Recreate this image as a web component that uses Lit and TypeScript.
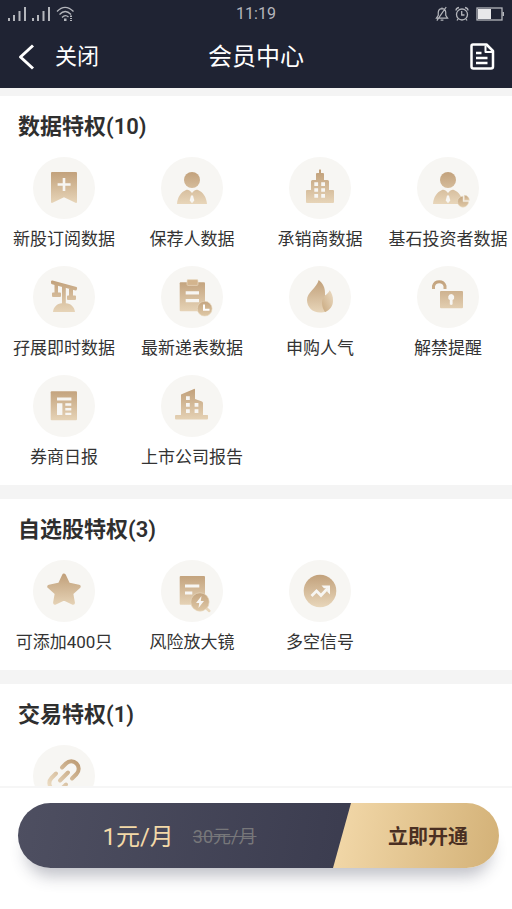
import { LitElement, html, css, svg, nothing } from "lit";
import type { SVGTemplateResult } from "lit";
import { customElement, property } from "lit/decorators.js";

const person = svg`
  <circle cx="31" cy="23" r="8"/>
  <path d="M16 47C16.500 40 20 35 25 33C27 32.500 28.500 33 31 36C33.500 33 35 32.500 37 33C42 35 45.500 40 46 47Z"/>
  <path class="hole" d="M30 38.500H32L33.300 43.500L31 46.300L28.700 43.500Z"/>`;

const icons: Record<string, SVGTemplateResult> = {
  bookmark: svg`
    <path d="M19 15H43Q44 15 44 16V45.500L43 46L31 40.300L19 46L18 45.500V16Q18 15 19 15Z"/>
    <path class="hole" d="M29.700 21H32.300V26.200H37.600V28.800H32.300V34H29.700V28.800H24.600V26.200H29.700Z"/>`,
  person,
  tower: svg`
    <path d="M30 13Q31 11.500 32 13V16H34Q35 16 35 17V23H38.500Q40 23 40 24.500V33H44Q45 33 45 34V45Q45 46 44 46H18Q17 46 17 45V34Q17 33 18 33H22V24.500Q22 23 23.500 23H27V17Q27 16 28 16H30Z"/>
    <path class="hole" d="M25.300 25.300h3.800v3.600h-3.800zM32.200 25.300h3.800v3.600h-3.800zM25.300 31.200h3.800v3.600h-3.800zM32.200 31.200h3.800v3.600h-3.800zM25.300 37.100h3.800v3.600h-3.800zM32.200 37.100h3.800v3.600h-3.800z"/>`,
  investor: svg`${person}
    <path class="halo" d="M46 39.200A5.500 5.500 0 1 0 51.500 44.700H46Z"/>
    <path class="halo" d="M47.300 43.300V38.300A5 5 0 0 1 52.300 43.300Z"/>`,
  scale: svg`
    <path d="M18 15.500Q18.200 14.300 19.500 14.600L43.500 21Q44.500 21.500 44 23Q43.600 24.800 42.500 24.600L19 18.300Q17.600 18 18 15.500Z"/>
    <path d="M21.500 18H25V26.500H27Q28 26.500 28 27.500V30Q28 31 27 31H20Q19 31 19 30V27.500Q19 26.500 20 26.500H21.500Z"/>
    <path d="M36 23H40V29.500H42Q43 29.500 43 30.500V33Q43 34 42 34H35Q34 34 34 33V30.500Q34 29.500 35 29.500H36Z"/>
    <path d="M29 19.500H32.800V37.200C38 37.500 41.500 41 42 46H20C20.500 41 24 37.500 29 37.200Z"/>`,
  clipboard: svg`
    <rect x="18.700" y="16.300" width="25.300" height="29" rx="1"/>
    <rect class="light" x="26" y="13.600" width="11" height="5.800" rx="1"/>
    <path class="hole" d="M24.700 25.300h13.300v3.300h-13.300zM24.700 33h13.300v3.300h-13.300z"/>
    <circle class="halo" cx="43.700" cy="42.700" r="7.400"/>
    <path class="cut" d="M43 38.500V43.700H48.500"/>`,
  flame: svg`
    <path d="M29.700 14C33.500 17 36.500 21 36 29L40 37L37 45.800C35.500 46.300 33.500 46.500 31 46.500C23.500 46.500 18 41 18 34C18 26 27.500 22.500 29.700 14Z"/>
    <path class="edge" d="M40.700 24.300C42.500 27 44.200 30 44 35C43.800 40.500 41 44 36 46C32 40 32 33 36 29.500C38 28 39.500 27 40.700 24.300Z"/>`,
  lock: svg`
    <path class="line thick" d="M16.500 23V20A6 6 0 0 1 28 20V23"/>
    <rect x="23" y="25" width="23" height="17.300" rx="1"/>
    <path class="hole" d="M34.200 28A3.200 3.200 0 0 1 35.600 34V38.200Q34.200 39.800 32.800 38.200V34A3.200 3.200 0 0 1 34.200 28Z"/>`,
  news: svg`
    <rect x="17.700" y="16.300" width="26.300" height="29" rx="1"/>
    <path class="hole" d="M24 22.600h14.400v3h-14.400zM24 28.300h5.400v11.800h-5.400zM32.300 28.300h6v2.400h-6zM32.300 33h6v2.400h-6zM32.300 37.700h6v2.400h-6z"/>`,
  company: svg`
    <path d="M20 19.500L33 14Q34 13.500 34 14.700V24L41 26.500Q42 27 42 28V40H46.500Q47 40 47 41V43.500Q47 44.500 46 44.500H15Q14 44.500 14 43.500V41Q14 40 15 40H20Z"/>
    <path class="hole" d="M25 21.300h3.800v3.800h-3.800zM25 28h3.800v3.800h-3.800zM33.600 28h3.800v3.800h-3.800zM25 34.200h3.800v3.800h-3.800zM33.600 34.200h3.800v3.800h-3.800z"/>`,
  star: svg`
    <path class="round" d="M31 15.500L35.200 24.500L45.700 26.600L38.200 33.200L39.900 42.700L31 38.500L22.100 42.700L23.800 33.200L16.300 26.600L26.800 24.500Z"/>`,
  magnifier: svg`
    <rect x="18.700" y="16" width="25.300" height="28.700" rx="1"/>
    <path class="hole" d="M24 24.600h14.300v3h-14.300zM24 31.600h7.300v3h-7.300z"/>
    <path class="line" d="M44.500 47.500L48.300 51"/>
    <circle class="halo" cx="39" cy="42" r="9.200"/>
    <path class="hole" d="M40.500 36L35 43H38.200L37.500 48L43 41H39.800Z"/>`,
  trend: svg`
    <circle cx="31" cy="31" r="16.300"/>
    <path class="cut wide" d="M22.500 36L27.500 31L32 35.500L38.500 28.500"/>
    <path class="hole" d="M32.500 25.500H41V34.500L38.200 31.800V28.300H35Z"/>`,
  link: svg`
    <path class="line chain" d="M29 22.500L33 18.500A7.300 7.300 0 0 1 43.500 29L39 33.500M27 35.500L35 27.500M33 39.500L29 43.500A7.300 7.300 0 0 1 18.500 33L23 28.500"/>`,
};

interface Privilege { icon: string; label?: string }
interface Group { title: string; items: Privilege[] }

const groups: Group[] = [
  {
    title: "数据特权",
    items: [
      { icon: "bookmark", label: "新股订阅数据" },
      { icon: "person", label: "保荐人数据" },
      { icon: "tower", label: "承销商数据" },
      { icon: "investor", label: "基石投资者数据" },
      { icon: "scale", label: "孖展即时数据" },
      { icon: "clipboard", label: "最新递表数据" },
      { icon: "flame", label: "申购人气" },
      { icon: "lock", label: "解禁提醒" },
      { icon: "news", label: "券商日报" },
      { icon: "company", label: "上市公司报告" },
    ],
  },
  {
    title: "自选股特权",
    items: [
      { icon: "star", label: "可添加400只" },
      { icon: "magnifier", label: "风险放大镜" },
      { icon: "trend", label: "多空信号" },
    ],
  },
  { title: "交易特权", items: [{ icon: "link" }] },
];

@customElement("privilege-icon")
export class PrivilegeIcon extends LitElement {
  @property() name = "";

  static styles = css`
    :host { display: block; width: 62px; height: 62px; border-radius: 50%; background: #f7f6f3; }
    .glyph { display: block; width: 62px; height: 62px; fill: url(#gold); }
    .hole { fill: #f7f6f3; }
    .light { fill: #d3b48d; stroke: #ecdfca; stroke-width: 0.600; }
    .halo { fill: url(#gold-own); stroke: #eadbc4; stroke-width: 0.600; }
    .edge { fill: url(#side); }
    .line { fill: none; stroke: url(#gold); stroke-width: 2.500; stroke-linecap: round; stroke-linejoin: round; }
    .thick { stroke-width: 3; stroke-linecap: butt; }
    .chain { stroke: url(#slant); stroke-width: 4; }
    .cut { fill: none; stroke: #fff; stroke-width: 2; }
    .wide { stroke: #f7f6f3; stroke-width: 2.800; }
    .round { stroke: url(#gold); stroke-width: 4; stroke-linejoin: round; }
  `;

  render() {
    return html`
      <svg class="glyph" viewBox="0 0 62 62" aria-hidden="true">
        <defs>
          <linearGradient id="gold" gradientUnits="userSpaceOnUse" x1="0" y1="14" x2="0" y2="47">
            <stop offset="0" stop-color="#c1a07a"/><stop offset="1" stop-color="#e8d6ba"/>
          </linearGradient>
          <linearGradient id="gold-own" x1="0" y1="0" x2="0" y2="1">
            <stop offset="0" stop-color="#c4a580"/><stop offset="1" stop-color="#dfc8a6"/>
          </linearGradient>
          <linearGradient id="side" x1="0" y1="1" x2="1" y2="0">
            <stop offset="0" stop-color="#c9a97f"/><stop offset="1" stop-color="#ecdcc4"/>
          </linearGradient>
          <linearGradient id="slant" gradientUnits="userSpaceOnUse" x1="44" y1="18" x2="18" y2="44">
            <stop offset="0" stop-color="#c09f78"/><stop offset="1" stop-color="#ecdcc3"/>
          </linearGradient>
        </defs>
        ${icons[this.name] ?? nothing}
      </svg>`;
  }
}

@customElement("status-bar")
export class StatusBar extends LitElement {
  static styles = css`
    :host { display: grid; grid-template-columns: 1fr auto 1fr; align-items: center; height: 27px; padding: 0 8px; color: #b4b6bc; font-size: 16px; line-height: 20px; }
    .side { display: flex; align-items: center; gap: 6px; }
    .icon { display: block; fill: none; stroke: currentColor; stroke-width: 1.300; }
    .end { justify-content: flex-end; }
    .solid { fill: currentColor; stroke: none; }
    .charge { fill: #e8e8ea; stroke: none; }
  `;

  private signal() {
    return html`<svg class="icon" width="18" height="14" viewBox="0 0 18 14" aria-hidden="true">
      <path class="solid" d="M0 11h2v3h-2zM5 8h2v6h-2zM10.500 4h2v10h-2zM16 0h2v14h-2z"/></svg>`;
  }

  render() {
    return html`
      <div class="side">
        ${this.signal()}${this.signal()}
        <svg class="icon" width="19" height="16" viewBox="0 0 19 16" aria-hidden="true">
          <path d="M1 5.500Q9 -2.800 17.500 5.500M3.500 8.500Q9.200 2.500 15 8.500M6 11.500Q9.200 8 12.500 11"/>
          <path class="solid" d="M8 12.500h2.500v2.500h-2.500zM14 9.500h2v1.500h-2zM14 12h2v1h-2zM14 14h2v1h-2z"/>
        </svg>
      </div>
      <time>11:19</time>
      <div class="side end">
        <svg class="icon" width="14" height="16" viewBox="0 0 15 16" aria-hidden="true">
          <path d="M1.500 12.500H13.500L11.500 9.500V6Q11 2.500 7.500 2.300Q4 2.500 3.500 6V9.500ZM7.500 2V1M6 14.500H9M2 15L12 .5"/>
        </svg>
        <svg class="icon" width="14" height="16" viewBox="0 0 14 16" aria-hidden="true">
          <circle cx="7" cy="8.500" r="5.500"/><path d="M6.700 5V9H9.500M1 4.500Q1 2 4 1.500M13 4.500Q13 2 10 1.500M3 13L2 14.500M11 13L12 14.500"/>
        </svg>
        <svg class="icon" width="29" height="14" viewBox="0 0 29 14" aria-hidden="true">
          <rect x="2" y="1" width="25" height="12"/><path class="charge" d="M3 2h13v10h-13z"/><path class="solid" d="M27.500 5h1.500v4h-1.500z"/>
        </svg>
      </div>`;
  }
}

@customElement("app-root")
export class AppRoot extends LitElement {
  static styles = css`
    :host { display: flex; flex-direction: column; height: 100vh; background: #fff; color: #333; font-family: Roboto, "Noto Sans CJK SC", sans-serif; }
    .header { flex: none; background: #1f2333; color: #fff; padding-bottom: 1px; }
    .nav { display: grid; grid-template-columns: 1fr auto 1fr; align-items: center; height: 60px; padding: 0 16px; }
    .plain { display: flex; align-items: center; gap: 19px; padding: 0; border: 0; background: none; color: inherit; font: inherit; font-size: 22px; line-height: 32px; }
    .records { justify-self: end; }
    .title { margin: 0; font-size: 24px; font-weight: 400; line-height: 32px; }
    .nav-icon { display: block; fill: none; stroke: #fff; stroke-width: 3; stroke-linejoin: round; }
    .content { flex: 1; min-height: 0; overflow-y: auto; scrollbar-width: none; display: flex; flex-direction: column; gap: 14px; padding-top: 8px; background: #f4f4f4; }
    .group { flex: none; padding: 15px 0 16px; background: #fff; }
    .heading { margin: 0 0 14px; padding: 0 18px; font-size: 22px; font-weight: 600; line-height: 32px; color: #2f2f2f; }
    .grid { display: grid; grid-template-columns: repeat(4, minmax(0, 1fr)); row-gap: 15px; margin: 0; padding: 0; list-style: none; }
    .item { display: flex; flex-direction: column; align-items: center; gap: 8px; font-size: 17px; line-height: 24px; white-space: nowrap; }
    .footer { flex: none; padding: 15px 13px 41px 18px; border-top: 2px solid #f6f6f6; background: #fff; }
    .offer { display: flex; height: 65px; border-radius: 33px; box-shadow: 0 16px 16px -8px rgba(60, 62, 85, 0.32); }
    .price { flex: 1; display: flex; align-items: center; justify-content: center; gap: 19px; padding: 2px 18px 0 8px; border-radius: 33px 0 0 33px; background: linear-gradient(100deg, #4e4f61, #3b3c4f); color: #f3d9a8; font-size: 24px; line-height: 32px; }
    .old { color: #77777a; font-size: 18px; line-height: 24px; }
    .open { width: 166px; margin-left: -18px; padding: 2px 0 0 24px; border: 0; border-radius: 0 33px 33px 0; background: linear-gradient(100deg, #f3d9aa, #d3b177); clip-path: polygon(18px 0, 100% 0, 100% 100%, 0 100%); color: #4a2f22; font: inherit; font-size: 20px; font-weight: 600; line-height: 32px; }
  `;

  render() {
    return html`
      <header class="header">
        <status-bar></status-bar>
        <nav class="nav">
          <button class="plain">
            <svg class="nav-icon" width="20" height="28" viewBox="0 0 20 28" aria-hidden="true"><path d="M17 2.500L4.500 14L17 25.500"/></svg>
            关闭
          </button>
          <h1 class="title">会员中心</h1>
          <button class="plain records" aria-label="记录">
            <svg class="nav-icon" width="28" height="28" viewBox="0 0 28 28" aria-hidden="true">
              <path d="M5 1.500H18.500L25 8V23.500Q25 25.500 23 25.500H5.500Q3.500 25.500 3.500 23.500V3Q3.500 1.500 5 1.500Z" stroke-width="2.500"/>
              <path d="M17.500 2.500V9H24" stroke-width="2"/>
              <path d="M8 10H13.500M8 15H19.500M8 20H19.500" stroke-width="2.500"/>
            </svg>
          </button>
        </nav>
      </header>
      <main class="content">
        ${groups.map((g) => html`
          <section class="group">
            <h2 class="heading">${g.title}(${g.items.length})</h2>
            <ul class="grid">
              ${g.items.map((i) => html`
                <li class="item">
                  <privilege-icon name=${i.icon}></privilege-icon>
                  ${i.label ? html`<span>${i.label}</span>` : nothing}
                </li>`)}
            </ul>
          </section>`)}
      </main>
      <footer class="footer">
        <div class="offer">
          <div class="price"><span>1元/月</span><s class="old">30元/月</s></div>
          <button class="open">立即开通</button>
        </div>
      </footer>`;
  }
}
